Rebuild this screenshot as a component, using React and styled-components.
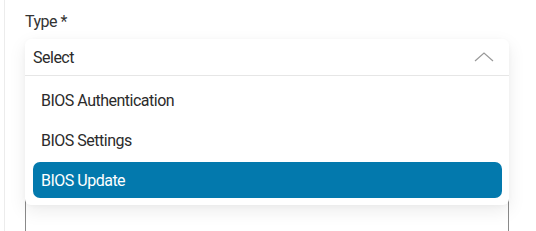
import React from "react";
import styled, { createGlobalStyle } from "styled-components";

const Global = createGlobalStyle`
  html, body { margin: 0; padding: 0; background: #fff; }
  body { font-family: "Roboto", "Liberation Sans", sans-serif; color: #2b2b2b; letter-spacing: -0.5px; }
`;

const Page = styled.div`
  height: 231px;
  overflow: hidden;
  margin-left: 4px;
  border-left: 1px solid #ececec;
  padding: 12px 27px 0 20px;
  box-sizing: border-box;
`;

const Field = styled.div`
  display: flex;
  flex-direction: column;
  gap: 7px;
`;

const Label = styled.label`
  font-size: 16px;
  line-height: 20px;
  color: #333;
`;

const SelectWrap = styled.div`
  position: relative;
  height: 36px;
`;

const Panel = styled.div`
  position: absolute;
  top: 0;
  left: 0;
  right: 0;
  z-index: 2;
  background: #fff;
  border-radius: 6px;
  box-shadow: 0 6px 18px rgba(0, 0, 0, 0.08), 0 1px 4px rgba(0, 0, 0, 0.03);
`;

const Header = styled.div`
  display: flex;
  align-items: center;
  justify-content: space-between;
  height: 36px;
  padding: 0 15px 0 8px;
  border-bottom: 1px solid #e6e6e6;
  font-size: 16px;
  color: #2b2b2b;
`;

const List = styled.ul`
  list-style: none;
  margin: 0;
  padding: 6px 7px 7px 8px;
  display: flex;
  flex-direction: column;
  gap: 4px;
`;

const Option = styled.li`
  height: 36px;
  display: flex;
  align-items: center;
  padding: 0 8px;
  border-radius: 7px;
  font-size: 16px;
  color: ${(p) => (p.$active ? "#fff" : "#2b2b2b")};
  background: ${(p) => (p.$active ? "#0379ad" : "transparent")};
`;

const TextArea = styled.div`
  margin-top: 50px;
  height: 140px;
  border: 1px solid #8a8a8a;
  border-radius: 4px;
`;

const Chevron = () => (
  <svg width="20" height="10" viewBox="0 0 20 10" fill="none">
    <polyline points="1,9 10,1 19,9" stroke="#999" strokeWidth="1.2" />
  </svg>
);

export default function App() {
  const options = ["BIOS Authentication", "BIOS Settings", "BIOS Update"];
  return (
    <>
      <Global />
      <Page>
        <Field>
          <Label>Type *</Label>
          <SelectWrap>
            <Panel>
              <Header>
                <span>Select</span>
                <Chevron />
              </Header>
              <List>
                {options.map((o, i) => (
                  <Option key={o} $active={i === 2}>
                    {o}
                  </Option>
                ))}
              </List>
            </Panel>
          </SelectWrap>
        </Field>
        <TextArea />
      </Page>
    </>
  );
}
